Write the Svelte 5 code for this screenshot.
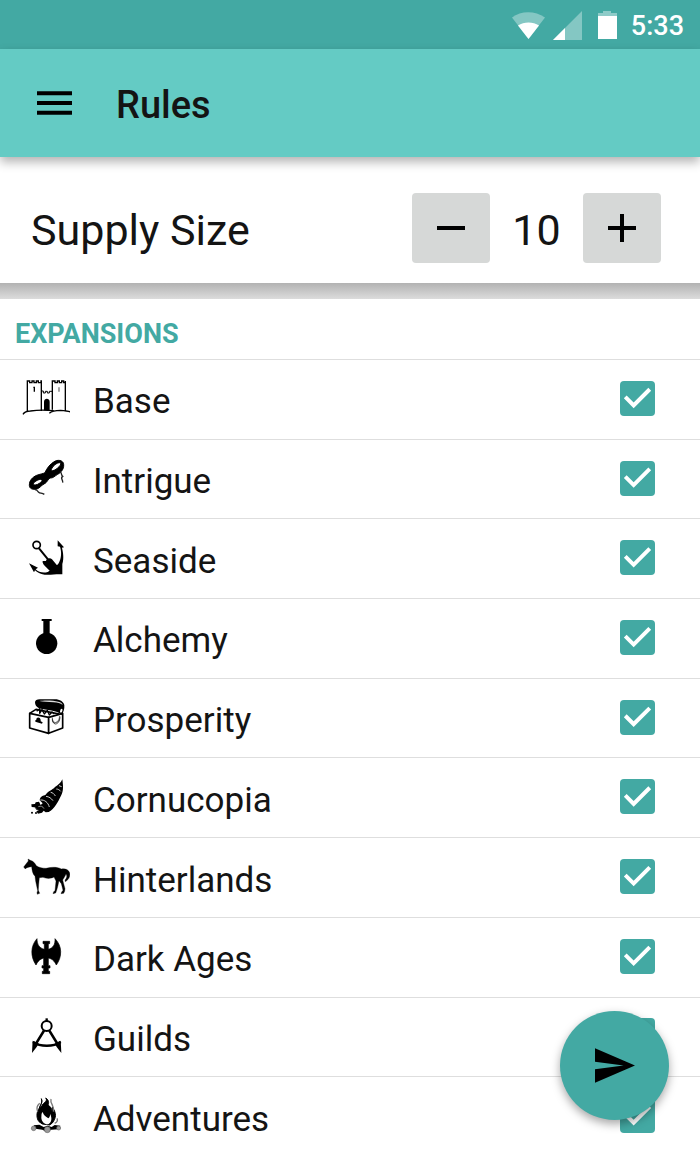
<script lang="ts">
	let supplySize = $state(10);

	let expansions = $state([
		{ id: 'base', name: 'Base', box: '36 15 144 144', enabled: true },
		{ id: 'intrigue', name: 'Intrigue', box: '36 14 144 144', enabled: true },
		{ id: 'seaside', name: 'Seaside', box: '36 13 144 144', enabled: true },
		{ id: 'alchemy', name: 'Alchemy', box: '36 252 144 144', enabled: true },
		{ id: 'prosperity', name: 'Prosperity', box: '36 11 144 144', enabled: true },
		{ id: 'cornucopia', name: 'Cornucopia', box: '36 10 144 144', enabled: true },
		{ id: 'hinterlands', name: 'Hinterlands', box: '36 9 144 144', enabled: true },
		{ id: 'darkages', name: 'Dark Ages', box: '36 248 144 144', enabled: true },
		{ id: 'guilds', name: 'Guilds', box: '36 8 144 144', enabled: true },
		{ id: 'adventures', name: 'Adventures', box: '36 247 144 144', enabled: true }
	]);
</script>

{#snippet expansionIcon(id: string)}
	{#if id === 'base'}
		<g fill="none" stroke="#000" stroke-width="4">
			<path d="M52 127V36h7v5h7v-5h6v5h7v-5h6v5h8v-5h1v90" />
			<path d="M127 122V36h8v5h7v-5h6v5h7v-5h6v5h5v-5v90" />
			<path d="M94 66h6v6h6v-5h6v5h6v-5h8" stroke-width="3" />
			<path d="M39 136c4-7 12-10 22-10 20-3 50-3 70-1M118 133c8-8 22-9 34-9 12 1 22 2 30 5" />
			<path d="M70 55h3v13" />
			<path d="M147 55v13" stroke="#777" />
		</g>
		<path d="M102 124V98c0-12 17-12 17 0v26z" />
	{:else if id === 'intrigue'}
		<path
			fill-rule="evenodd"
			stroke="#000"
			stroke-width="3"
			stroke-linejoin="round"
			d="M58 108c0-15 9-24 22-30 10-4 18-4 25-8 5-12 15-27 31-35 12-5 25 0 25 11 1 14-9 24-18 29-8 4-13 12-23 11-6 2-8 14-18 18-9 4-12 13-24 16-12 1-20-3-20-12zM70 104c3 5 11 3 18-2 6-4 9-8 8-11-5-2-12 0-18 4-5 3-8 6-8 9zM124 64c5 1 12-2 19-8 7-6 11-12 9-15-5-3-13 1-19 7-6 5-10 12-9 16z"
		/>
		<path d="M75 121c7 1 8 4 11 8 4 4 10 1 17 6M150 67c7 4 2 10 8 14-9 6 2 9 0 19" fill="none" stroke="#222" stroke-width="4" />
	{:else if id === 'seaside'}
		<circle cx="80" cy="46" r="11" fill="none" stroke="#000" stroke-width="5" />
		<path d="M87 56l27 33" stroke="#000" stroke-width="6" />
		<path d="M108 94c0-7 12-12 18-5l15 18 5-6c9-17 9-34 4-50l-7-1 0-18 19 21-6 1c6 24 4 40 1 49v31c-17-2-35 3-53 1-14-2-22-6-29-13l-3 6-15-27 27 13-7 5c9 9 24 12 36 8l6-4-15-15c-5-5-7-9-6-14z" />
	{:else if id === 'alchemy'}
		<circle cx="110" cy="343" r="32" />
		<path d="M95 270h30v6h-6v42h-19v-42h-5z" />
	{:else if id === 'prosperity'}
		<g fill="none" stroke="#000" stroke-width="5" stroke-linejoin="round">
			<path d="M59 72l57 12v48l-57-16z" fill="#fff" />
			<path d="M116 84l42-12v44l-42 16z" fill="#fff" />
			<path d="M59 72l19-12 70 14" />
			<path d="M149 80c0 9-3 16-10 19-8 3-11-2-12-9" stroke-width="4" stroke="#777" />
			<path d="M127 85c0 10 2 18 9 19 8 0 13-9 14-20" stroke-width="2" />
			<path d="M80 66l9-8v14l7-11 7 13 9-11 6 14 8-9 7 6" stroke-width="4" />
		</g>
		<path d="M75 39c0-6 6-9 14-9h46c14 0 26 7 28 17 1 12-3 23-8 30-14-15-45-13-68-20-8-4-12-11-12-18z" />
		<path d="M88 35c15-3 43-2 57 2 8 2 12 5 13 10-7-5-15-7-27-8-17-2-32-1-43-4z" fill="#ddd" />
		<path d="M152 60c5-5 7 1 4 7s-6 3-6-1z" fill="#fff" />
		<path d="M79 91c0-9 12-8 13 1v4l6 3-2 4-20-6v-4z" />
	{:else if id === 'cornucopia'}
		<path d="M157 29c2 17 5 34-4 49-8 16-19 40-37 49l-9 1-6-5-5 6-12 3-5-7 8-4-8-1-6-7-8-1-1-8 11-1 2-5 10-2 5 10 6-5-9-9c1-12 12-15 17-16 8-12 20-14 29-24 11-7 17-12 22-23z" />
		<circle cx="66" cy="129" r="3" />
		<circle cx="78" cy="130" r="3" />
		<g fill="none" stroke="#ccc" stroke-width="3">
			<path d="M91 91c13-1 23 7 27 21M108 80c9 1 16 6 21 13M122 68c6 1 11 5 14 11M139 58c5 0 10 3 13 7M147 48l8 3" />
			<path d="M85 111c7-3 14-1 17 6M72 113l7 4" stroke-width="2" />
		</g>
	{:else if id === 'hinterlands'}
		<path d="M41 51l14-18-1-6 7 4c11 3 15 11 18 16 9 7 19 7 29 8 16-4 34-5 46 2 13-2 21 2 25 11 2 10-1 20-13 27l-1-5c7-7 6-14 3-18-3 8-7 13-10 18l7 26-1 8-3 6-8 1 2-5 4-5-5-20-7-9-4 18-3 11-3 8-8 2 2-6 4-3 3-29-6-12c-10 6-23 5-33 1l-11 1-2 21-1 17 4 9-7 3-1-5 2-6-6-28-2-15c-8-8-9-20-10-29-9 2-15 1-19 7z" stroke="#000" stroke-width="1" />
	{:else if id === 'darkages'}
		<path d="M81 268c-20 22-20 54-3 79 6-13 14-18 23-21v23h-5v7h5v10h-4v7h22v-7h-4v-10h5v-7h-5v-23c10 2 18 8 24 21 18-25 18-57-4-79 1 18-6 28-20 32v-17h4v-7h-20v7h4v17c-15-4-22-14-22-32z" stroke="#000" stroke-width="2" />
	{:else if id === 'guilds'}
		<g fill="none" stroke="#000" stroke-width="6">
			<circle cx="110" cy="50" r="15" />
			<path d="M110 27v9" stroke-width="7" />
			<path d="M102 64l-24 39M118 64l24 39" stroke-width="8" />
			<path d="M69 98c22 15 61 15 83 0" stroke-width="8" />
		</g>
		<path d="M68 94l18 9-6 10-14 18 1-20zM152 94l-18 9 6 10 14 18-1-20z" />
	{:else}
		<path d="M94 267c6 13-5 18-5 28 5-2 8-12 16-17 5-5 6-9 2-13 10 6 10 14 7 22 8 3 11 10 12 17 3-3 3-8 1-12 13 20 12 32 0 48l-8 6-22-3-10-7c-8-10-8-27-1-37 4-10 12-18 8-32z" stroke="#000" stroke-width="3" />
		<path d="M94 325c1-9-1-13 4-18 3 10 9 14 17 19 4-4 6-8 5-14 8 15 4 29-8 32-9 0-17-8-18-19z" fill="#fff" />
		<path d="M123 268c-4 14 12 21 7 38M89 281c-9 8-10 16-6 25M141 326c3 6-1 12-7 15" fill="none" stroke="#777" stroke-width="4" />
		<path d="M71 347l17-2 13 7 12-4 12 4 9-6 17 2-5 11-22 1-14 7-13-7-21-3z" />
		<g fill="#999" stroke="#666" stroke-width="2">
			<circle cx="71" cy="356" r="7" />
			<circle cx="112" cy="360" r="9" />
			<circle cx="146" cy="355" r="6" />
		</g>
	{/if}
{/snippet}

<div class="screen">
	<div class="status-bar">
		<svg class="signals" viewBox="0 0 108 32" aria-hidden="true">
			<path d="M1 8.500C10 1.500 24 1.500 34 8.500L17.500 30z" fill="#fff" fill-opacity=".35" />
			<path d="M7 16.500c6-4 15-4 21 0L17.500 30z" fill="#fff" />
			<path d="M42 31L71 2v29z" fill="#fff" fill-opacity=".35" />
			<path d="M42 31l12-12v12z" fill="#fff" />
			<path d="M87 7V4h5V2h8v2h6v3z" fill="#fff" fill-opacity=".4" />
			<path d="M87 7h19v23H87z" fill="#fff" />
		</svg>
		<span class="clock">5:33</span>
	</div>

	<header class="toolbar">
		<button class="menu" type="button" aria-label="Open menu">
			<svg viewBox="0 0 36 24" aria-hidden="true">
				<path d="M0 0h36v4H0zM0 10h36v4H0zM0 20h36v4H0z" />
			</svg>
		</button>
		<h1>Rules</h1>
	</header>

	<section class="supply">
		<span class="supply-label" id="supply-label">Supply Size</span>
		<div class="stepper" role="group" aria-labelledby="supply-label">
			<button type="button" aria-label="Decrease" onclick={() => supplySize--}>
				<svg viewBox="0 0 28 28" aria-hidden="true"><path d="M0 12h28v4H0z" /></svg>
			</button>
			<output>{supplySize}</output>
			<button type="button" aria-label="Increase" onclick={() => supplySize++}>
				<svg viewBox="0 0 28 28" aria-hidden="true"><path d="M0 12h12V0h4v12h12v4H16v12h-4V16H0z" /></svg>
			</button>
		</div>
	</section>

	<main>
		<h2>Expansions</h2>
		<ul>
			{#each expansions as expansion (expansion.id)}
				<li>
					<label>
						<svg class="icon" viewBox={expansion.box} aria-hidden="true">
							{@render expansionIcon(expansion.id)}
						</svg>
						<span class="name">{expansion.name}</span>
						<input type="checkbox" bind:checked={expansion.enabled} />
					</label>
				</li>
			{/each}
		</ul>
	</main>

	<button class="fab" type="button" aria-label="Generate">
		<svg viewBox="0 0 42 36" aria-hidden="true">
			<path d="M0 0l42 18L0 36V22l30-4L0 14z" />
		</svg>
	</button>
</div>

<style>
	:global(body) {
		margin: 0;
	}

	.screen {
		position: relative;
		display: flex;
		flex-direction: column;
		height: 100vh;
		overflow: hidden;
		background: #fff;
		color: #141414;
		font-family: Roboto, sans-serif;
	}

	button {
		display: flex;
		align-items: center;
		justify-content: center;
		padding: 0;
		border: 0;
		cursor: pointer;
	}

	.status-bar {
		display: flex;
		flex: none;
		align-items: center;
		justify-content: flex-end;
		gap: 12px;
		height: 49px;
		padding-right: 16px;
		background: #43a9a3;
	}

	.signals {
		width: 108px;
		height: 32px;
	}

	.clock {
		padding-top: 2px;
		color: #fff;
		font-size: 27px;
		font-weight: 500;
	}

	.toolbar {
		z-index: 1;
		display: flex;
		flex: none;
		align-items: center;
		gap: 44px;
		height: 108px;
		padding-left: 37px;
		background: #64cbc4;
		box-shadow: 0 5px 10px rgba(0, 0, 0, 0.3);
	}

	.menu {
		background: none;
	}

	.menu svg {
		width: 35px;
		height: 24px;
	}

	h1 {
		margin: 0;
		padding-top: 4px;
		font-size: 38px;
		font-weight: 500;
	}

	.supply {
		display: flex;
		flex: none;
		align-items: center;
		justify-content: space-between;
		padding: 36px 39px 20px 31px;
	}

	.supply-label,
	output {
		padding-top: 4px;
		font-size: 43px;
		line-height: 52px;
	}

	.stepper {
		display: flex;
		align-items: center;
	}

	.stepper button {
		width: 78px;
		height: 70px;
		border-radius: 4px;
		background: #d6d8d7;
	}

	.stepper svg {
		width: 28px;
		height: 28px;
	}

	output {
		width: 93px;
		text-align: center;
	}

	main {
		flex: 1;
		min-height: 0;
		overflow-y: auto;
		scrollbar-width: none;
	}

	main::before {
		content: '';
		display: block;
		height: 16px;
		background: linear-gradient(#b2b2b2, #dcdcdc);
	}

	h2 {
		margin: 0;
		padding: 19px 15px 9px;
		color: #43a9a3;
		font-size: 27px;
		font-weight: 700;
		line-height: 32px;
		text-transform: uppercase;
	}

	/* ten equal rows */
	ul {
		display: grid;
		grid-auto-rows: 1fr;
		min-height: 797px;
		margin: 0;
		padding: 0;
		list-style: none;
	}

	li {
		border-top: 1px solid #dedede;
	}

	label {
		display: flex;
		align-items: center;
		height: 100%;
		padding: 0 45px 2px 22px;
		box-sizing: border-box;
		cursor: pointer;
	}

	.icon {
		flex: none;
		width: 48px;
		height: 48px;
	}

	.name {
		flex: 1;
		padding: 8px 0 0 23px;
		font-size: 35px;
		line-height: 40px;
	}

	input {
		appearance: none;
		width: 35px;
		height: 35px;
		margin: 0;
		border: 4px solid #757575;
		border-radius: 4px;
		cursor: pointer;
	}

	input:checked {
		border: 0;
		background: #43a9a3;
	}

	input:checked::before {
		content: '';
		display: block;
		height: 100%;
		background: #fff;
		clip-path: polygon(39% 78%, 11% 50%, 19% 42%, 39% 62%, 81% 20%, 89% 28%);
	}

	.fab {
		position: absolute;
		right: 31px;
		bottom: 31px;
		width: 109px;
		height: 109px;
		border-radius: 50%;
		background: #43a9a3;
		box-shadow: 0 4px 10px rgba(0, 0, 0, 0.35);
	}

	.fab svg {
		width: 40px;
		height: 35px;
	}
</style>
